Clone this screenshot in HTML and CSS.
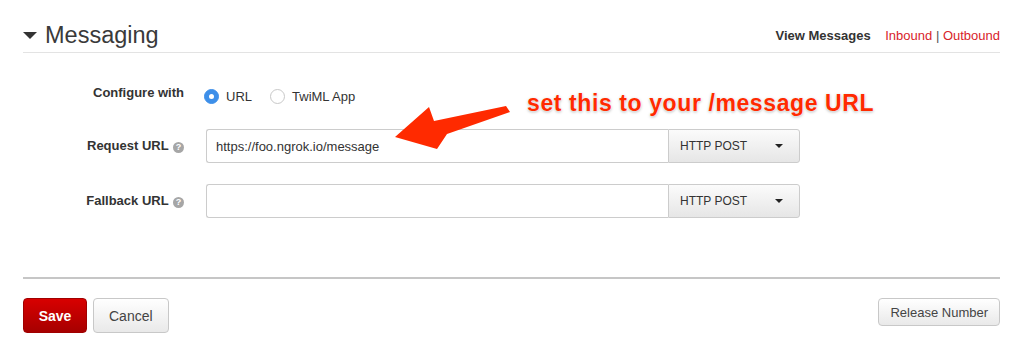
FILE: index.html
```html
<!DOCTYPE html>
<html lang="en">
	<head>
		<meta charset="UTF-8" />
		<meta name="viewport" content="width=device-width, initial-scale=1.0" />
		<title>Messaging</title>
		<link rel="stylesheet" href="styles.css">
	</head>
	<body>
		<div class="page">
			<div class="section-head">
				<h2 class="title"><span class="toggle"></span>Messaging</h2>
				<div class="links">
					<span class="view">View Messages</span>
					<a href="#" class="red-link">Inbound</a> <span class="sep">|</span> <a href="#" class="red-link">Outbound</a>
				</div>
			</div>

			<div class="form">
				<div class="row row-radio">
					<label class="label label-top">Configure with</label>
					<div class="radios">
						<span class="radio checked"></span><span class="radio-text">URL</span>
						<span class="radio"></span><span class="radio-text">TwiML App</span>
					</div>
				</div>
				<div class="row">
					<label class="label">Request URL <span class="help">?</span></label>
					<div class="field">
						<input type="text" class="url" value="https://foo.ngrok.io/message" />
						<button class="method">HTTP POST<span class="caret"></span></button>
					</div>
				</div>
				<div class="row">
					<label class="label">Fallback URL <span class="help">?</span></label>
					<div class="field">
						<input type="text" class="url" value="" />
						<button class="method">HTTP POST<span class="caret"></span></button>
					</div>
				</div>
			</div>

			<div class="actions">
				<button class="btn btn-save">Save</button>
				<button class="btn">Cancel</button>
				<button class="btn btn-small release">Release Number</button>
			</div>
		</div>

		<!-- annotation drawn over the screenshot -->
		<div class="note">set this to your /message URL</div>
		<svg class="arrow" width="1024" height="358" viewBox="0 0 1024 358">
			<polygon points="395,137 429,107 434,121 506,106 510,112 447,134 437,149" fill="#ff2a00" />
		</svg>
	</body>
</html>
```

FILE: styles.css
```css
body {
	margin: 0;
	background-color: #fff;
	font-family: "Liberation Sans", Arial, sans-serif;
	color: #333;
}
.page {
	padding: 0 24px 0 23px;
}
.section-head {
	display: flex;
	justify-content: space-between;
	align-items: center;
	padding: 21px 0 3px;
	border-bottom: 1px solid #e3e3e3;
}
.title {
	display: flex;
	align-items: center;
	margin: 0;
	font-size: 23.5px;
	font-weight: normal;
	line-height: 28px;
	color: #3a3a3a;
}
.toggle {
	width: 0;
	height: 0;
	border-left: 7px solid transparent;
	border-right: 7px solid transparent;
	border-top: 7px solid #333;
	margin: 0 8px 0 0;
}
.links {
	font-size: 13px;
}
.view {
	font-weight: bold;
	color: #333;
	margin-right: 11px;
}
.red-link {
	color: #d8232a;
	text-decoration: none;
}
.sep {
	color: #555;
}
.form {
	padding: 31px 0 59px;
}
.row {
	display: flex;
	align-items: flex-start;
	gap: 20px;
	margin-bottom: 21px;
}
.row:last-child {
	margin-bottom: 0;
}
.row-radio {
	height: 24px;
	align-items: center;
}
.label {
	width: 161px;
	flex-shrink: 0;
	text-align: right;
	font-size: 13px;
	font-weight: bold;
	line-height: 18px;
	padding-top: 8px;
	color: #333;
}
.label-top {
	align-self: flex-start;
	padding-top: 0;
}
.help {
	display: inline-block;
	width: 11px;
	height: 11px;
	border-radius: 50%;
	background-color: #a6a6a6;
	color: #fff;
	font-size: 9px;
	line-height: 11px;
	text-align: center;
	vertical-align: 0;
	margin-left: 1px;
}
.radios {
	display: flex;
	align-items: center;
	font-size: 13px;
}
.radio {
	width: 13px;
	height: 13px;
	border: 1px solid #c8c8c8;
	border-radius: 50%;
	background-color: #fff;
	position: relative;
}
.radio.checked {
	background-color: #3d8fe9;
	border-color: #3d8fe9;
}
.radio.checked::after {
	content: "";
	position: absolute;
	left: 4px;
	top: 4px;
	width: 5px;
	height: 5px;
	border-radius: 50%;
	background-color: #fff;
}
.radio-text {
	margin: 0 18px 0 7px;
}
.field {
	display: flex;
	margin-left: 2px;
}
.url {
	width: 462px;
	height: 34px;
	box-sizing: border-box;
	border: 1px solid #ccc;
	border-right: none;
	border-radius: 3px 0 0 3px;
	padding: 0 9px;
	font-family: "Liberation Sans", Arial, sans-serif;
	font-size: 13px;
	color: #333;
	outline: none;
}
.method {
	width: 132px;
	height: 34px;
	display: flex;
	align-items: center;
	justify-content: space-between;
	padding: 0 16px 0 11px;
	border: 1px solid #ccc;
	border-radius: 0 3px 3px 0;
	background: linear-gradient(#fbfbfb, #e6e6e6);
	font-family: "Liberation Sans", Arial, sans-serif;
	font-size: 12px;
	color: #333;
}
.caret {
	width: 0;
	height: 0;
	border-left: 4px solid transparent;
	border-right: 4px solid transparent;
	border-top: 4px solid #222;
}
.actions {
	display: flex;
	align-items: flex-start;
	gap: 6px;
	border-top: 2px solid #c6c6c6;
	padding-top: 19px;
}
.btn {
	height: 35px;
	padding: 0 15px;
	border: 1px solid #c8c8c8;
	border-radius: 4px;
	background: linear-gradient(#fff, #e9e9e9);
	font-family: "Liberation Sans", Arial, sans-serif;
	font-size: 14px;
	color: #444;
}
.btn-save {
	width: 64px;
	padding: 0;
	border-color: #a00000;
	background: linear-gradient(#d80000, #a60000);
	color: #fff;
	font-weight: bold;
}
.btn-small {
	height: 28px;
	padding: 0 11px;
	font-size: 13px;
}
.release {
	margin-left: auto;
}
.note {
	position: absolute;
	left: 527px;
	top: 90px;
	font-size: 23px;
	font-weight: bold;
	letter-spacing: 0.6px;
	line-height: 26px;
	color: #ff2a00;
	text-shadow: 0 0 1px #fff, 0 0 2px #fff, 0 1px 3px rgba(0, 0, 0, 0.35);
}
.arrow {
	position: absolute;
	left: 0;
	top: 0;
	pointer-events: none;
}
```
